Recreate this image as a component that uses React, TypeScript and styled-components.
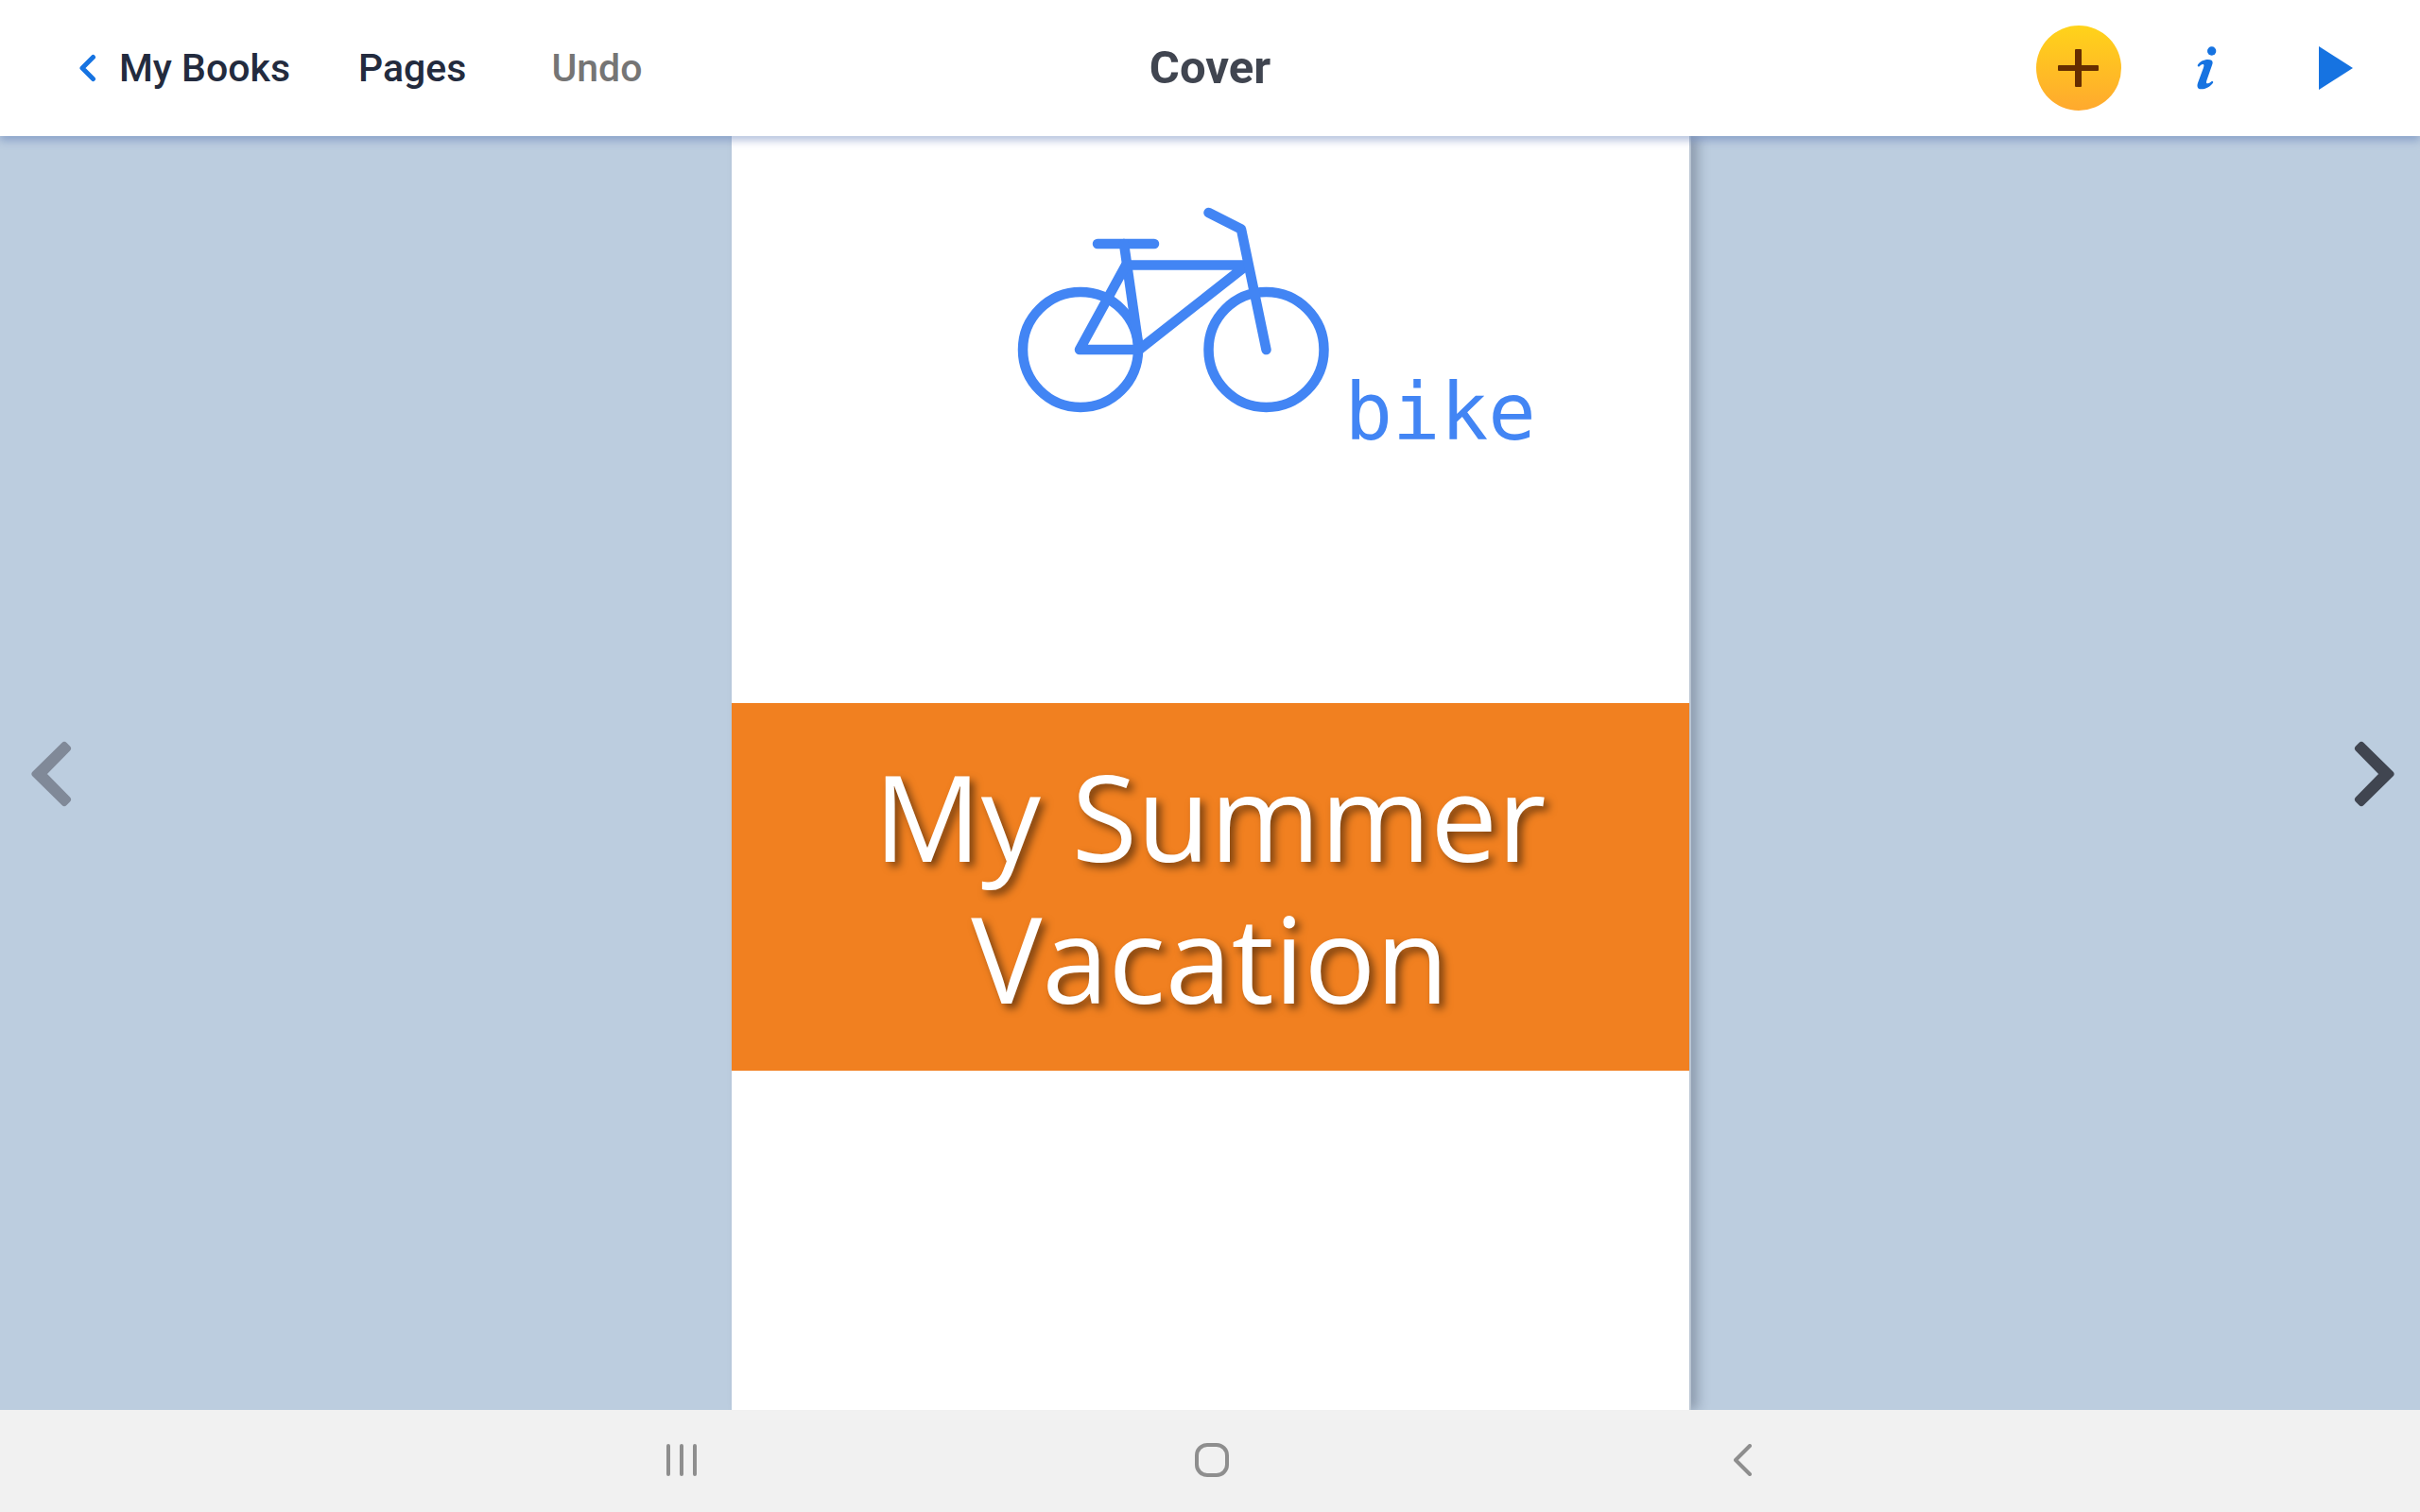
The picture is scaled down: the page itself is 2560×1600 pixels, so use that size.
import React from 'react';
import styled, { createGlobalStyle } from 'styled-components';

const GlobalStyle = createGlobalStyle`
  * { box-sizing: border-box; }
  body { margin: 0; background: #bccddf; }
  button {
    display: flex;
    align-items: center;
    justify-content: center;
    margin: 0;
    padding: 0;
    border: 0;
    background: none;
    font: inherit;
    cursor: pointer;
  }
`;

const Screen = styled.div`
  display: flex;
  flex-direction: column;
  min-height: 100vh;
  font-family: Roboto, "Liberation Sans", sans-serif;
`;

const Header = styled.header`
  position: relative;
  z-index: 1;
  display: grid;
  grid-template-columns: 1fr auto 1fr;
  align-items: center;
  height: 144px;
  background: #fff;
  box-shadow: 0 5px 8px rgba(62, 95, 165, 0.36);
`;

const Menu = styled.nav`
  display: flex;
  align-items: center;
  padding-left: 84px;
  height: 100%;
`;

const MenuButton = styled.button<{ $space?: number }>`
  && {
    height: 100%;
    gap: 22px;
    padding: 0 ${(p) => p.$space ?? 36}px;
    color: #232b3e;
    font-size: 41px;
    font-weight: 500;
    line-height: 48px;
  }
  &&:first-child {
    padding-left: 0;
  }
  &&:disabled {
    color: #757575;
    cursor: default;
  }
`;

const Title = styled.h1`
  margin: 0;
  color: #404550;
  font-size: 49px;
  font-weight: 700;
  line-height: 56px;
`;

const Tools = styled.div`
  display: flex;
  justify-content: flex-end;
  padding-right: 21px;
`;

const ToolButton = styled.button`
  && {
    width: 136px;
    height: 96px;
    color: #1673e1;
  }
`;

const AddDisc = styled.span`
  display: flex;
  align-items: center;
  justify-content: center;
  width: 90px;
  height: 90px;
  border-radius: 50%;
  background: linear-gradient(#ffd31a, #ffa92e);
`;

const Workspace = styled.main`
  flex: 1;
  display: grid;
  grid-template-columns: 1fr auto 1fr;
`;

const PageTurn = styled.button<{ $side: 'left' | 'right' }>`
  && {
    align-self: center;
    justify-self: ${(p) => (p.$side === 'left' ? 'start' : 'end')};
    margin: 2px ${(p) => (p.$side === 'left' ? 33 : 27)}px 0;
    color: #404550;
  }
  &&:disabled {
    color: #808998;
    cursor: default;
  }
`;

const Cover = styled.article`
  display: flex;
  flex-direction: column;
  width: 1013px;
  background: #fff;
  box-shadow: 2px 0 0 #b9c5d2, 9px 0 12px rgba(30, 40, 60, 0.3);
`;

const Picture = styled.figure`
  flex: none;
  display: flex;
  align-items: flex-end;
  height: 600px;
  margin: 0;
  padding: 0 0 266px 298px;
  color: #4285f4;

  svg {
    margin-bottom: 40px;
  }
`;

const PictureWord = styled.figcaption`
  padding-left: 11px;
  font-family: "DejaVu Sans Mono", monospace;
  font-size: 84px;
  line-height: 84px;
`;

const Banner = styled.h2`
  margin: 0;
  padding: 44px 40px 45px;
  background: #f18020;
  color: #fff;
  font-family: "Open Sans", "Noto Sans", sans-serif;
  font-size: 126px;
  font-weight: 400;
  line-height: 150px;
  text-align: center;
  text-shadow: 5px 5px 8px rgba(0, 0, 0, 0.5);
`;

const SystemBar = styled.footer`
  display: grid;
  grid-template-columns: repeat(3, 1fr);
  height: 108px;
  padding: 0 435px 2px 440px;
  background: #f1f1f1;
`;

const SystemButton = styled.button`
  && {
    color: #8e8e8e;
  }
`;

const BackIcon = () => (
  <svg width="20" height="30" viewBox="0 0 20 30" fill="none" stroke="#1673e1" strokeWidth="5" strokeLinejoin="round" strokeLinecap="round" aria-hidden="true">
    <path d="M14.5 3.5 3 15l11.500 11.500" />
  </svg>
);

const PlusIcon = () => (
  <svg width="44" height="42" viewBox="0 0 44 42" fill="#662d00" aria-hidden="true">
    <rect x="0" y="18" width="43" height="6" rx="1" />
    <rect x="18" y="1" width="7" height="40" rx="1" />
  </svg>
);

const InfoIcon = () => (
  <svg width="22" height="46" viewBox="0 0 66 138" fill="currentColor" aria-hidden="true">
    <circle cx="47" cy="15" r="14" />
    <path d="M2 60C8 49 22 42 35 42C48 42 53 48 48 60L32 106C29 114 29 118 32 118C37 118 43 115 48 110Q53 111 51 116C44 127 27 136 14 136C2 136 -1 128 3 116L19 73C22 65 24 58 20 57C16 56 11 60 8 64Q2 66 2 60Z" />
  </svg>
);

const PlayIcon = () => (
  <svg width="36" height="46" viewBox="0 0 36 46" fill="currentColor" aria-hidden="true">
    <path d="M0 0 36 23 0 46z" />
  </svg>
);

const Arrow = ({ flip }: { flip?: boolean }) => (
  <svg width="43" height="72" viewBox="0 0 43 72" aria-hidden="true">
    <path
      d="M35 5.500 4 36 35 66.500 38.500 63 12 36 38.500 9z"
      fill="currentColor"
      stroke="currentColor"
      strokeWidth="7"
      strokeLinejoin="round"
      transform={flip ? 'matrix(-1 0 0 1 43 0)' : undefined}
    />
  </svg>
);

const Bike = () => (
  <svg width="340" height="224" viewBox="0 0 340 224" fill="none" stroke="currentColor" strokeWidth="10.500" strokeLinecap="round" strokeLinejoin="round" role="img" aria-label="Bicycle">
    <circle cx="71" cy="156" r="61" />
    <circle cx="267.500" cy="156" r="61" />
    <path d="M89 44h60" />
    <path d="M117 44 133 156" />
    <path d="M133 156H70L119 66.500H247L133 156" />
    <path d="M206.500 11 241 28.500 267.500 156" />
  </svg>
);

const RecentsIcon = () => (
  <svg width="32" height="34" viewBox="0 0 32 34" stroke="currentColor" strokeWidth="4" strokeLinecap="round" aria-hidden="true">
    <path d="M2 2v30M16 2v30M30 2v30" />
  </svg>
);

const HomeIcon = () => (
  <svg width="36" height="36" viewBox="0 0 36 36" fill="none" stroke="currentColor" strokeWidth="4" aria-hidden="true">
    <rect x="2" y="2" width="32" height="32" rx="11" />
  </svg>
);

const SystemBackIcon = () => (
  <svg width="20" height="34" viewBox="0 0 20 34" fill="none" stroke="currentColor" strokeWidth="4" strokeLinecap="round" strokeLinejoin="round" aria-hidden="true">
    <path d="M17 2 2 17l15 15" />
  </svg>
);

export default function App() {
  return (
    <Screen>
      <GlobalStyle />
      <Header>
        <Menu>
          <MenuButton type="button"><BackIcon />My Books</MenuButton>
          <MenuButton type="button">Pages</MenuButton>
          <MenuButton type="button" $space={54} disabled>Undo</MenuButton>
        </Menu>
        <Title>Cover</Title>
        <Tools>
          <ToolButton type="button" aria-label="Add"><AddDisc><PlusIcon /></AddDisc></ToolButton>
          <ToolButton type="button" aria-label="Info"><InfoIcon /></ToolButton>
          <ToolButton type="button" aria-label="Play"><PlayIcon /></ToolButton>
        </Tools>
      </Header>
      <Workspace>
        <PageTurn type="button" $side="left" aria-label="Previous page" disabled><Arrow /></PageTurn>
        <Cover>
          <Picture>
            <Bike />
            <PictureWord>bike</PictureWord>
          </Picture>
          <Banner>My Summer Vacation</Banner>
        </Cover>
        <PageTurn type="button" $side="right" aria-label="Next page"><Arrow flip /></PageTurn>
      </Workspace>
      <SystemBar>
        <SystemButton type="button" aria-label="Recent apps"><RecentsIcon /></SystemButton>
        <SystemButton type="button" aria-label="Home"><HomeIcon /></SystemButton>
        <SystemButton type="button" aria-label="Back"><SystemBackIcon /></SystemButton>
      </SystemBar>
    </Screen>
  );
}
